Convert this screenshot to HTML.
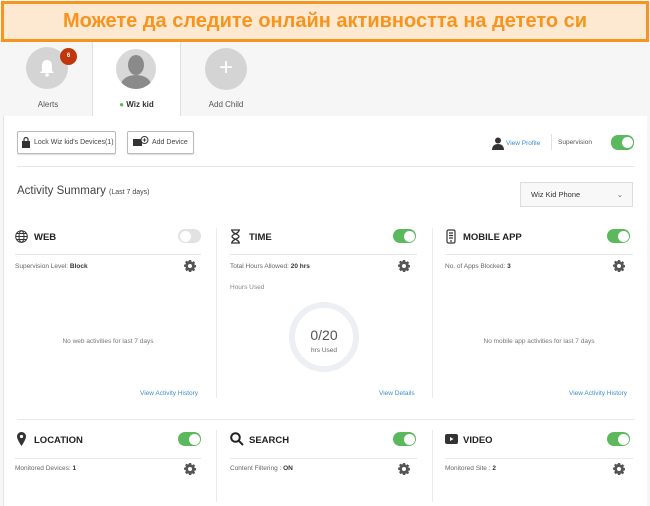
<!DOCTYPE html>
<html><head><meta charset="utf-8"><style>
*{margin:0;padding:0;box-sizing:border-box}
body{width:650px;height:502px;overflow:hidden;background:#f6f6f6;font-family:"Liberation Sans","DejaVu Sans",sans-serif;position:relative;color:#333}
.a{position:absolute}
.banner{left:1px;top:1px;width:648px;height:41px;border:3px solid #f7941d;background:#fde8d2;color:#f7941d;font-weight:bold;font-size:20px;text-align:center;line-height:35px}
.circ{border-radius:50%;background:#d4d4d4}
.lbl{font-size:8px;color:#555;text-align:center}
.panel{left:3px;top:116px;width:644px;height:390px;background:#fff;border-left:1px solid #e4e4e4}
.btn{border:1px solid #bbb;border-radius:2px;font-size:7px;color:#444;background:#fff;box-shadow:0 1px 1px #ddd;line-height:22px;padding-left:16px}
.tog{width:23px;height:14px;border-radius:7px;background:#5cb85c}
.tog::after{content:"";position:absolute;right:1.5px;top:1.5px;width:11px;height:11px;border-radius:50%;background:#fff}
.tog.off{background:#e2e2e2}
.tog.off::after{left:1.5px;right:auto}
.h{font-size:9.5px;font-weight:bold;color:#222}
.sm{font-size:6.5px;color:#666}
.sm b{color:#333}
.ln{height:1px;background:#e8e8e8}
.link{font-size:6.5px;color:#3a8fd0}
.gear{width:12px;height:12px}
</style></head><body>
<svg width="0" height="0" style="position:absolute"><defs><g id="g"><path fill="#555" d="M6 0l1.2.2.3 1.6 1.1.5 1.3-1 1.7 1.7-1 1.3.5 1.1 1.6.3v2.4l-1.6.3-.5 1.1 1 1.3-1.7 1.7-1.3-1-1.1.5-.3 1.6H4.8l-.3-1.6-1.1-.5-1.3 1L.4 10.2l1-1.3-.5-1.1L-.7 7.5V5.1l1.6-.3.5-1.1-1-1.3L2.1.7l1.3 1 1.1-.5.3-1.6z" transform="translate(.7 0) scale(.9)"/><circle cx="6" cy="6" r="2" fill="#fff"/></g></defs></svg>
<div class="a banner">Можете да следите онлайн активността на детето си</div>

<div class="a" style="left:92px;top:42px;width:89px;height:78px;background:#fff;border-left:1px solid #e0e0e0;border-right:1px solid #e0e0e0"></div>
<div class="a circ" style="left:26px;top:47px;width:42px;height:42px"></div>
<svg class="a" style="left:38px;top:58px" width="18" height="22" viewBox="0 0 18 22"><path d="M9 2c-3.5 0-5 2.5-5 5.5v5L2 15h14l-2-2.5v-5C14 4.5 12.5 2 9 2z" fill="#fff"/><circle cx="9" cy="17" r="1.8" fill="#fff"/></svg>
<div class="a" style="left:60px;top:48px;width:17px;height:17px;border-radius:50%;background:#c1360c;color:#fff;font-size:6px;font-weight:bold;text-align:center;line-height:17px">6</div>
<div class="a lbl" style="left:0;top:100px;width:96px">Alerts</div>
<div class="a circ" style="left:116px;top:49px;width:40px;height:40px;overflow:hidden;background:#d8d8d8">
<div class="a" style="left:12px;top:6px;width:16px;height:20px;border-radius:50%;background:#8a8a8a"></div>
<div class="a" style="left:5px;top:26px;width:30px;height:20px;border-radius:50% 50% 0 0;background:#8a8a8a"></div></div>
<div class="a lbl" style="left:92px;top:100px;width:89px;font-weight:bold;color:#333"><span style="color:#5cb85c">●</span> Wiz kid</div>
<div class="a circ" style="left:205px;top:48px;width:42px;height:42px;color:#fff;font-size:24px;text-align:center;line-height:40px">+</div>
<div class="a lbl" style="left:181px;top:100px;width:90px">Add Child</div>

<div class="a panel"></div>
<div class="a btn" style="left:17px;top:131px;width:99px;height:23px">Lock Wiz kid's Devices(1)</div>
<svg class="a" style="left:22px;top:136px" width="8" height="12" viewBox="0 0 8 12"><path d="M2 5V3.5a2 2 0 014 0V5" fill="none" stroke="#333" stroke-width="1.2"/><rect y="5" width="8" height="7" fill="#333"/></svg>
<div class="a btn" style="left:127px;top:131px;width:67px;height:23px;padding-left:24px">Add Device</div>
<svg class="a" style="left:133px;top:136px" width="16" height="11" viewBox="0 0 16 11"><rect x="0" y="3" width="9" height="7" fill="#333"/><circle cx="11.5" cy="4" r="3.5" fill="#fff" stroke="#333"/><path d="M11.5 2.2v3.6M9.7 4h3.6" stroke="#333" stroke-width=".9"/></svg>
<svg class="a" style="left:492px;top:137px" width="12" height="13" viewBox="0 0 12 13"><circle cx="6" cy="3.5" r="3" fill="#333"/><path d="M0 13c0-4 2.5-6 6-6s6 2 6 6z" fill="#333"/></svg>
<div class="a link" style="left:506px;top:140px">View Profile</div>
<div class="a" style="left:551px;top:134px;width:1px;height:16px;background:#e0e0e0"></div>
<div class="a sm" style="left:558px;top:139px;color:#555">Supervision</div>
<div class="a tog" style="left:611px;top:135px;width:23px;height:15px"></div>
<div class="a ln" style="left:17px;top:166px;width:618px"></div>
<div class="a" style="left:17px;top:185px;font-size:11.5px;color:#444">Activity Summary <span style="font-size:7px">(Last 7 days)</span></div>
<div class="a" style="left:520px;top:182px;width:113px;height:25px;border:1px solid #ddd;background:#f8f8f8;font-size:7.5px;color:#333;line-height:24px;padding-left:10px">Wiz Kid Phone<span style="position:absolute;right:9px;color:#666">⌄</span></div>

<div class="a" style="left:216px;top:228px;width:1px;height:170px;background:#ececec"></div>
<div class="a" style="left:432px;top:228px;width:1px;height:170px;background:#ececec"></div>
<div class="a" style="left:216px;top:430px;width:1px;height:72px;background:#ececec"></div>
<div class="a" style="left:432px;top:430px;width:1px;height:72px;background:#ececec"></div>
<div class="a ln" style="left:17px;top:419px;width:618px"></div>

<svg class="a" style="left:15px;top:230px" width="13" height="13" viewBox="0 0 13 13" fill="none" stroke="#333" stroke-width="1"><circle cx="6.5" cy="6.5" r="5.8"/><ellipse cx="6.5" cy="6.5" rx="2.5" ry="5.8"/><path d="M.7 6.5h11.6M1.5 3.5h10M1.5 9.5h10"/></svg>
<div class="a h" style="left:34px;top:232px">WEB</div>
<div class="a tog off" style="left:178px;top:229px"></div>
<div class="a ln" style="left:15px;top:254px;width:186px"></div>
<div class="a sm" style="left:15px;top:263px">Supervision Level: <b>Block</b></div>
<svg class="a gear" style="left:184px;top:260px" viewBox="0 0 12 12"><use href="#g"/></svg>
<div class="a sm" style="left:15px;top:338px;width:186px;text-align:center;color:#777">No web activities for last 7 days</div>
<div class="a link" style="left:140px;top:390px">View Activity History</div>

<svg class="a" style="left:230px;top:229px" width="11" height="15" viewBox="0 0 11 15" fill="none" stroke="#333" stroke-width="1.3"><path d="M1 1h9M1 14h9M2 1c0 4 7 4 7 6.5S2 10 2 14M9 1c0 4-7 4-7 6.5S9 10 9 14"/></svg>
<div class="a h" style="left:249px;top:232px">TIME</div>
<div class="a tog" style="left:393px;top:229px"></div>
<div class="a ln" style="left:230px;top:254px;width:187px"></div>
<div class="a sm" style="left:230px;top:263px">Total Hours Allowed: <b>20 hrs</b></div>
<svg class="a gear" style="left:398px;top:260px" viewBox="0 0 12 12"><use href="#g"/></svg>
<div class="a sm" style="left:230px;top:284px;color:#888">Hours Used</div>
<div class="a" style="left:289px;top:302px;width:70px;height:70px;border-radius:50%;border:6px solid #eceff3"></div>
<div class="a" style="left:289px;top:327px;width:70px;text-align:center;font-size:14px;color:#555">0/20</div>
<div class="a sm" style="left:289px;top:347px;width:70px;text-align:center">hrs Used</div>
<div class="a link" style="left:379px;top:390px">View Details</div>

<svg class="a" style="left:446px;top:229px" width="10" height="15" viewBox="0 0 10 15" fill="none" stroke="#333" stroke-width="1.2"><rect x="1" y="1" width="8" height="13" rx="1.5"/><path d="M3 4h4M3 6.5h4M3 9h4M4 12h2"/></svg>
<div class="a h" style="left:463px;top:232px">MOBILE APP</div>
<div class="a tog" style="left:607px;top:229px"></div>
<div class="a ln" style="left:445px;top:254px;width:188px"></div>
<div class="a sm" style="left:445px;top:263px">No. of Apps Blocked: <b>3</b></div>
<svg class="a gear" style="left:613px;top:260px" viewBox="0 0 12 12"><use href="#g"/></svg>
<div class="a sm" style="left:445px;top:338px;width:188px;text-align:center;color:#777">No mobile app activities for last 7 days</div>
<div class="a link" style="left:569px;top:390px">View Activity History</div>

<svg class="a" style="left:17px;top:432px" width="9" height="14" viewBox="0 0 9 14"><path d="M4.5 0C2 0 0 2 0 4.5 0 7.5 4.5 14 4.5 14S9 7.5 9 4.5C9 2 7 0 4.5 0z" fill="#333"/><circle cx="4.5" cy="4.5" r="1.6" fill="#fff"/></svg>
<div class="a h" style="left:34px;top:435px">LOCATION</div>
<div class="a tog" style="left:178px;top:432px"></div>
<div class="a ln" style="left:15px;top:458px;width:186px"></div>
<div class="a sm" style="left:15px;top:465px">Monitored Devices: <b>1</b></div>
<svg class="a gear" style="left:184px;top:463px" viewBox="0 0 12 12"><use href="#g"/></svg>

<svg class="a" style="left:230px;top:432px" width="14" height="14" viewBox="0 0 14 14" fill="none" stroke="#222" stroke-width="2"><circle cx="5.5" cy="5.5" r="4.3"/><path d="M8.7 8.7L13 13"/></svg>
<div class="a h" style="left:249px;top:435px">SEARCH</div>
<div class="a tog" style="left:393px;top:432px"></div>
<div class="a ln" style="left:230px;top:458px;width:187px"></div>
<div class="a sm" style="left:230px;top:465px">Content Filtering : <b>ON</b></div>
<svg class="a gear" style="left:398px;top:463px" viewBox="0 0 12 12"><use href="#g"/></svg>

<svg class="a" style="left:445px;top:434px" width="13" height="10" viewBox="0 0 13 10"><rect width="13" height="10" rx="2" fill="#333"/><path d="M5 3l3.5 2L5 7z" fill="#fff"/></svg>
<div class="a h" style="left:463px;top:435px">VIDEO</div>
<div class="a tog" style="left:607px;top:432px"></div>
<div class="a ln" style="left:445px;top:458px;width:188px"></div>
<div class="a sm" style="left:445px;top:465px">Monitored Site : <b>2</b></div>
<svg class="a gear" style="left:613px;top:463px" viewBox="0 0 12 12"><use href="#g"/></svg>
</body></html>
